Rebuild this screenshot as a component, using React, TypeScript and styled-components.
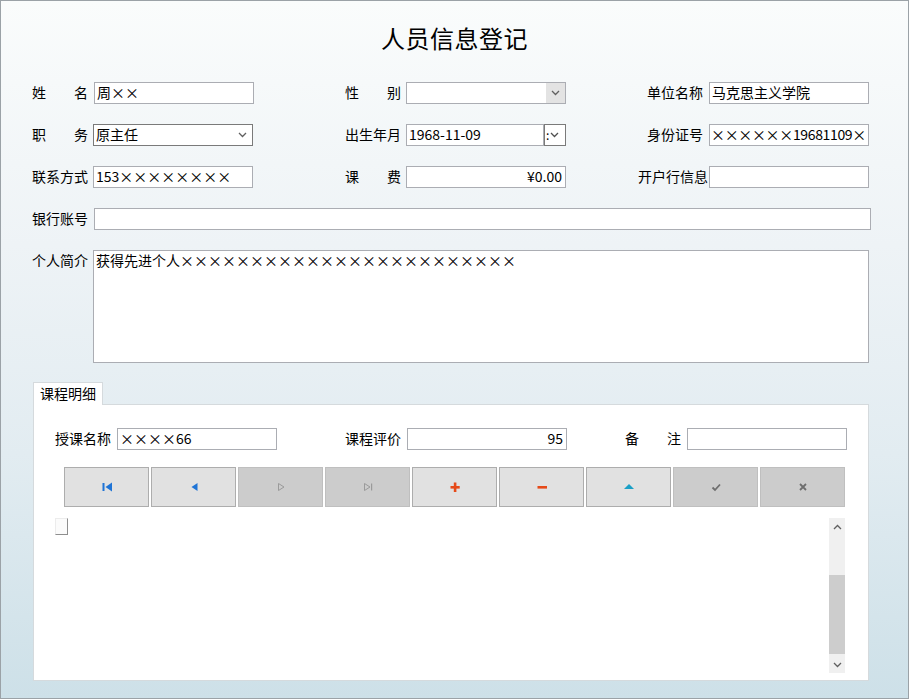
import React from "react";
import styled, {createGlobalStyle} from "styled-components";

const GlobalStyle = createGlobalStyle`
    html, body {
        margin: 0;
        padding: 0;
        background: #ffffff;
    }
    body {
        font-family: "Noto Sans CJK SC", "Noto Sans", sans-serif;
        font-size: 14px;
        color: #000;
    }
`;

const Window = styled.div`
    width: 909px;
    height: 699px;
    box-sizing: border-box;
    border: 1px solid #9ba2a7;
    background: linear-gradient(180deg, #fafcfc 0%, #eef3f6 35%, #e2ecf1 65%, #cde0e8 100%);
    display: flex;
    flex-direction: column;
    overflow: hidden;
`;

const Title = styled.h1`
    margin: 21px 0 0;
    height: 32px;
    line-height: 32px;
    font-size: 24px;
    font-weight: 400;
    text-align: center;
    letter-spacing: 0.5px;
`;

const Form = styled.div`
    margin-top: 28px;
    padding-left: 31px;
    display: flex;
    flex-direction: column;
    gap: 20px;
`;

const Row = styled.div`
    display: flex;
    align-items: flex-start;
`;

const Cell = styled.div<{ $w?: number }>`
    display: flex;
    width: ${p => p.$w ? p.$w + "px" : "auto"};
    flex-shrink: 0;
`;

const Label = styled.span<{ $w: number, $right?: boolean, $pr?: number }>`
    width: ${p => p.$w}px;
    box-sizing: border-box;
    flex-shrink: 0;
    line-height: 20px;
    white-space: pre;
    text-align: ${p => p.$right ? "right" : "left"};
    padding-right: ${p => p.$pr ?? 0}px;
`;

const Box = styled.div<{ $w: number, $h?: number, $align?: string, $dark?: boolean, $tight?: boolean }>`
    width: ${p => p.$w}px;
    height: ${p => p.$h ?? 22}px;
    box-sizing: border-box;
    border: 1px solid ${p => p.$dark ? "#7a7a7a" : "#abadb3"};
    background: #fff;
    line-height: 19px;
    padding: 0 3px 0 ${p => p.$tight ? 1 : 2}px;
    letter-spacing: ${p => p.$tight ? "-0.35px" : "normal"};
    text-align: ${p => p.$align ?? "left"};
    white-space: nowrap;
    overflow: hidden;
    flex-shrink: 0;
`;

const Combo = styled.div<{ $w: number, $dark?: boolean }>`
    width: ${p => p.$w}px;
    height: 22px;
    box-sizing: border-box;
    border: 1px solid ${p => p.$dark ? "#7a7a7a" : "#abadb3"};
    background: #fff;
    display: flex;
    align-items: stretch;
    flex-shrink: 0;
`;

const ComboText = styled.span`
    flex: 1;
    line-height: 19px;
    padding-left: 2px;
`;

const DropButton = styled.span<{ $shaded?: boolean }>`
    width: 19px;
    display: flex;
    align-items: center;
    justify-content: center;
    background: ${p => p.$shaded ? "#e3e3e3" : "transparent"};
`;

const DateWrap = styled.div`
    display: flex;
    width: 160px;
`;

const SpinButton = styled.span`
    width: 22px;
    height: 22px;
    box-sizing: border-box;
    border: 1px solid #7a7a7a;
    background: #fff;
    display: flex;
    align-items: center;
    font-size: 12px;
    line-height: 20px;
    padding-left: 1px;
    gap: 1px;
`;

const Tabs = styled.div`
    margin: 19px 0 0 32px;
    display: flex;
    flex-direction: column;
`;

const TabHead = styled.div`
    width: 70px;
    height: 23px;
    box-sizing: border-box;
    border: 1px solid #d5dadd;
    border-bottom: none;
    background: #fff;
    line-height: 20px;
    padding-left: 6px;
    position: relative;
    z-index: 1;
`;

const TabPanel = styled.div`
    margin-top: -1px;
    width: 836px;
    height: 277px;
    box-sizing: border-box;
    border: 1px solid #d5dadd;
    background: #fff;
    padding: 23px 0 0 21px;
    display: flex;
    flex-direction: column;
`;

const NavBar = styled.div`
    margin: 17px 0 0 9px;
    display: flex;
    gap: 2px;
`;

const NavButton = styled.div<{ $disabled?: boolean }>`
    width: 85px;
    height: 40px;
    box-sizing: border-box;
    border: 1px solid ${p => p.$disabled ? "#bfbfbf" : "#adadad"};
    background: ${p => p.$disabled ? "#cccccc" : "#e1e1e1"};
    display: flex;
    align-items: center;
    justify-content: center;
`;

const GridArea = styled.div`
    margin-top: 11px;
    width: 790px;
    height: 155px;
    display: flex;
    justify-content: space-between;
    align-items: flex-start;
`;

const RowMarker = styled.div`
    width: 13px;
    height: 17px;
    box-sizing: border-box;
    background: #fbfbfb;
    border: 1px solid #ececec;
    border-right-color: #8e8e8e;
    border-bottom-color: #8e8e8e;
`;

const ScrollBar = styled.div`
    width: 16px;
    height: 155px;
    background: #f0f0f0;
    display: flex;
    flex-direction: column;
`;

const ScrollArrow = styled.div`
    height: 17px;
    display: flex;
    align-items: center;
    justify-content: center;
`;

const ScrollTrack = styled.div`
    flex: 1;
    display: flex;
    flex-direction: column;
    padding-top: 40px;
    padding-bottom: 2px;
`;

const ScrollThumb = styled.div`
    flex: 1;
    background: #cdcdcd;
`;

const Chevron = ({up, color = "#606060"}: { up?: boolean, color?: string }) => (
    <svg width="9" height="6" viewBox="0 0 9 6">
        <path d={up ? "M1 5 L4.5 1.5 L8 5" : "M1 1 L4.5 4.5 L8 1"} fill="none" stroke={color} strokeWidth="1.3"/>
    </svg>
);

const blue = "#1f74d6";
const red = "#e64a19";
const grey = "#9a9a9a";

const icons: { disabled?: boolean, draw: React.ReactNode }[] = [
    {draw: <><rect x="1.5" y="2" width="2" height="8" fill={blue}/><path d="M11 1.5 L11 10.5 L4.5 6 Z" fill={blue}/></>},
    {draw: <path d="M9.5 2 L9.5 10 L3.5 6 Z" fill={blue}/>},
    {disabled: true, draw: <path d="M3.5 2.5 L3.5 9.5 L9 6 Z" fill="none" stroke={grey} strokeWidth="1"/>},
    {disabled: true, draw: <><path d="M2.5 2.5 L2.5 9.5 L8 6 Z" fill="none" stroke={grey} strokeWidth="1"/><rect x="9" y="2.5" width="1.2" height="7" fill={grey}/></>},
    {draw: <><rect x="4.8" y="1.5" width="2.6" height="9.5" fill={red}/><rect x="1.5" y="5" width="9.2" height="2.6" fill={red}/></>},
    {draw: <rect x="1.5" y="5" width="9.5" height="2.6" fill={red}/>},
    {draw: <path d="M6 3 L11 8 L1 8 Z" fill="#1a9fc6"/>},
    {disabled: true, draw: <path d="M2.5 6.5 L5 9 L10 3.5" fill="none" stroke="#6e6e6e" strokeWidth="1.8"/>},
    {disabled: true, draw: <path d="M3 3 L9 9 M9 3 L3 9" fill="none" stroke="#6e6e6e" strokeWidth="1.8"/>},
];

const x = (n: number) => "×".repeat(n);

const App = () => {
    return (
        <>
            <GlobalStyle/>
            <Window>
                <Title>人员信息登记</Title>
                <Form>
                    <Row>
                        <Cell $w={313}>
                            <Label $w={62}>{"姓　　名"}</Label>
                            <Box $w={160}>周{x(2)}</Box>
                        </Cell>
                        <Cell $w={292}>
                            <Label $w={61}>{"性　　别"}</Label>
                            <Combo $w={160}>
                                <ComboText/>
                                <DropButton $shaded><Chevron/></DropButton>
                            </Combo>
                        </Cell>
                        <Cell>
                            <Label $w={72} $right $pr={6}>单位名称</Label>
                            <Box $w={160}>马克思主义学院</Box>
                        </Cell>
                    </Row>
                    <Row>
                        <Cell $w={313}>
                            <Label $w={61}>{"职　　务"}</Label>
                            <Combo $w={160} $dark>
                                <ComboText>原主任</ComboText>
                                <DropButton><Chevron/></DropButton>
                            </Combo>
                        </Cell>
                        <Cell $w={292}>
                            <Label $w={61}>出生年月</Label>
                            <DateWrap>
                                <Box $w={138}>1968-11-09</Box>
                                <SpinButton>:<Chevron color="#505050"/></SpinButton>
                            </DateWrap>
                        </Cell>
                        <Cell>
                            <Label $w={72} $right $pr={6}>身份证号</Label>
                            <Box $w={160} $tight>{x(6)}19681109{x(1)}</Box>
                        </Cell>
                    </Row>
                    <Row>
                        <Cell $w={313}>
                            <Label $w={61}>联系方式</Label>
                            <Box $w={160}>153{x(8)}</Box>
                        </Cell>
                        <Cell $w={292}>
                            <Label $w={61}>{"课　　费"}</Label>
                            <Box $w={160} $align="right">¥0.00</Box>
                        </Cell>
                        <Cell>
                            <Label $w={72} $right $pr={1}>开户行信息</Label>
                            <Box $w={160}/>
                        </Cell>
                    </Row>
                    <Row>
                        <Label $w={62}>银行账号</Label>
                        <Box $w={777}/>
                    </Row>
                    <Row>
                        <Label $w={61}>个人简介</Label>
                        <Box $w={776} $h={113}>获得先进个人{x(24)}</Box>
                    </Row>
                </Form>
                <Tabs>
                    <TabHead>课程明细</TabHead>
                    <TabPanel>
                        <Row>
                            <Cell $w={290}>
                                <Label $w={62}>授课名称</Label>
                                <Box $w={160}>{x(4)}66</Box>
                            </Cell>
                            <Cell $w={280}>
                                <Label $w={62}>课程评价</Label>
                                <Box $w={160} $align="right">95</Box>
                            </Cell>
                            <Cell>
                                <Label $w={62}>{"备　　注"}</Label>
                                <Box $w={160}/>
                            </Cell>
                        </Row>
                        <NavBar>
                            {icons.map((b, i) => (
                                <NavButton key={i} $disabled={b.disabled}>
                                    <svg width="12" height="12" viewBox="0 0 12 12">{b.draw}</svg>
                                </NavButton>
                            ))}
                        </NavBar>
                        <GridArea>
                            <RowMarker/>
                            <ScrollBar>
                                <ScrollArrow><Chevron up/></ScrollArrow>
                                <ScrollTrack><ScrollThumb/></ScrollTrack>
                                <ScrollArrow><Chevron/></ScrollArrow>
                            </ScrollBar>
                        </GridArea>
                    </TabPanel>
                </Tabs>
            </Window>
        </>
    );
};

export default App;
